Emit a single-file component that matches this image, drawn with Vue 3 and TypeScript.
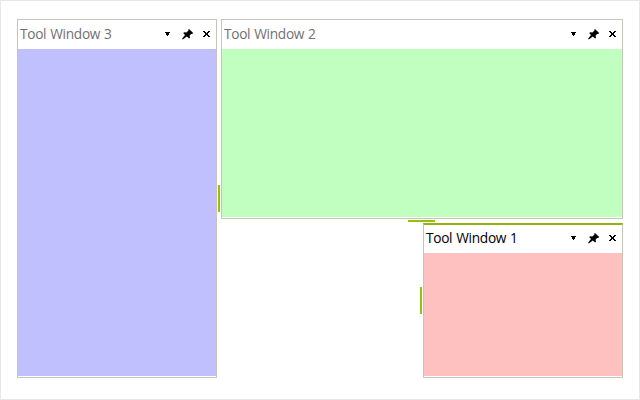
<script setup lang="ts">
interface ToolWindow {
  id: string
  title: string
  active?: boolean
}

const windows: ToolWindow[] = [
  { id: 'left', title: 'Tool Window 3' },
  { id: 'top', title: 'Tool Window 2' },
  { id: 'bottom', title: 'Tool Window 1', active: true },
]
</script>

<template>
  <main class="dock">
    <section v-for="w in windows" :key="w.id" class="panel" :class="[w.id, { active: w.active }]">
      <header class="caption">
        <span class="title">{{ w.title }}</span>
        <svg class="tools" width="46" height="12" viewBox="0 0 46 12" shape-rendering="crispEdges">
          <path d="M0 4h5v1h-1v2h-1v1h-1v-1h-1v-2h-1z" />
          <path
            shape-rendering="auto"
            d="M24 1l4.2 4-1.1 1-1-.1-1.5 1.6.4 2.2-.9.9-2.3-2.1-4 2.9-.7-.6 2.9-3.8-1.8-1.9 1-.9 2.2.2 2.1-1.8-.3-.8z"
          />
          <path d="M38 3h2v1h1v1h1v-1h1v-1h2v1h-1v1h-1v2h1v1h1v1h-2v-1h-1v-1h-1v1h-1v1h-2v-1h1v-1h1v-2h-1v-1h-1z" />
        </svg>
      </header>
      <div class="content"></div>
    </section>
    <div class="gutter g-left"><i class="grip vertical"></i></div>
    <div class="gutter g-top"><i class="grip horizontal"></i></div>
    <div class="gutter g-bottom"><i class="grip vertical"></i></div>
  </main>
</template>

<style>
body {
  margin: 0;
  background: #fff;
}
</style>

<style scoped>
.dock {
  box-sizing: border-box;
  width: 640px;
  height: 400px;
  padding: 18px 16px 21px;
  border: 1px solid #e7e7e7;
  display: grid;
  grid-template-columns: 200px 4px 198px 4px 200px;
  grid-template-rows: 200px 4px 155px;
  font-family: "Open Sans", "Noto Sans", sans-serif;
}
.panel {
  box-sizing: border-box;
  border: 1px solid #c6c6b8;
  display: flex;
  flex-direction: column;
}
.left {
  grid-area: 1 / 1 / 4 / 2;
}
.top {
  grid-area: 1 / 3 / 2 / 6;
}
.bottom {
  grid-area: 3 / 5 / 4 / 6;
}
.active {
  border-top: 2px solid #8fb40f;
}
.caption {
  box-sizing: border-box;
  height: 29px;
  padding: 0 5px 1px 2px;
  display: flex;
  align-items: center;
  justify-content: space-between;
}
.active .caption {
  height: 28px;
  padding-bottom: 2px;
}
.title {
  font-size: 13.7px;
  line-height: 20px;
  letter-spacing: -0.3px;
  word-spacing: 0.7px;
  color: #717171;
  white-space: nowrap;
}
.active .title {
  color: #000;
}
.tools {
  display: block;
  flex: none;
  fill: #000;
}
.content {
  flex: 1;
  margin-bottom: 1px;
}
.left .content {
  background: #c0c0ff;
}
.top .content {
  background: #c0ffc0;
}
.bottom .content {
  background: #ffc0c0;
}
.gutter {
  display: flex;
}
.g-left {
  grid-area: 1 / 2 / 4 / 3;
  align-items: center;
  padding-left: 1px;
}
.g-top {
  grid-area: 2 / 3 / 3 / 6;
  align-items: center;
  justify-content: center;
  padding-right: 1px;
}
.g-bottom {
  grid-area: 3 / 4 / 4 / 5;
  align-items: center;
  padding-left: 1px;
}
.grip {
  background: #97c00b;
}
.vertical {
  width: 2px;
  height: 27px;
}
.horizontal {
  width: 27px;
  height: 2px;
}
</style>
